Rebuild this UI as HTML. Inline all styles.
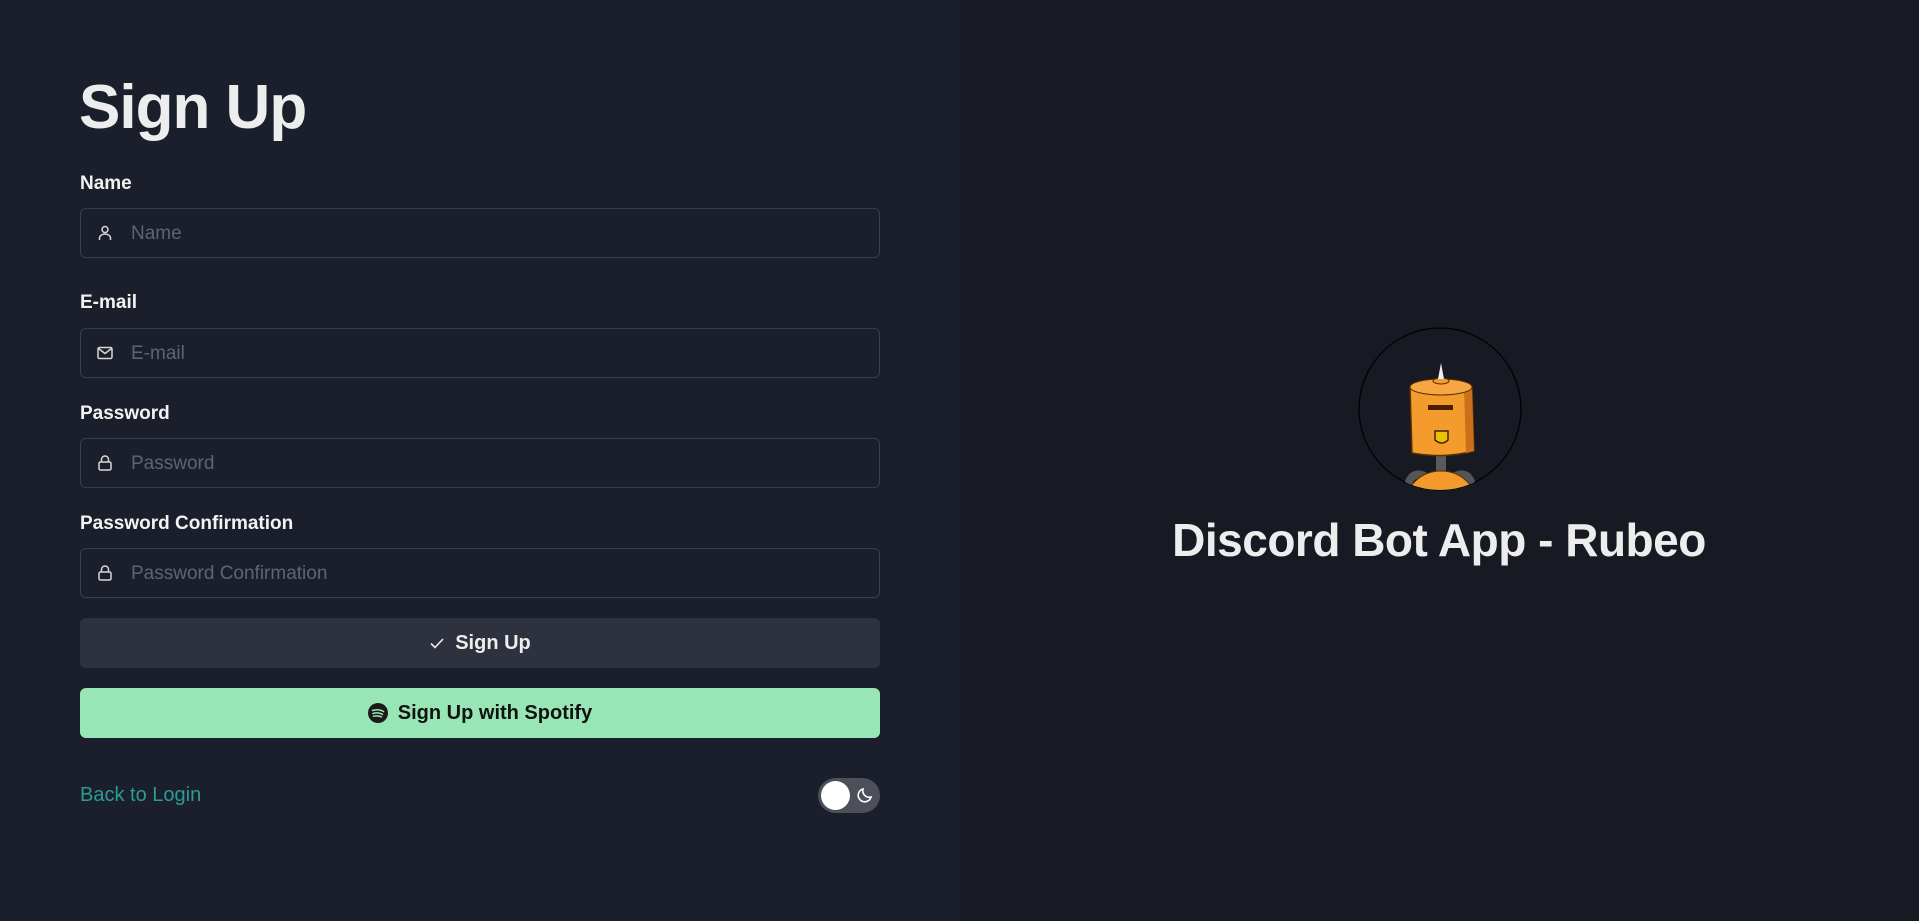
<!DOCTYPE html>
<html><head><meta charset="utf-8"><style>
*{box-sizing:border-box;margin:0;padding:0}
body{width:1919px;height:921px;overflow:hidden;font-family:"Liberation Sans",sans-serif;background:#171a22;position:relative}
.left{position:absolute;left:0;top:0;width:960px;height:921px;background:#1b1f2b}
h1{position:absolute;left:79px;top:72px;font-size:62px;font-weight:bold;color:#ededed;letter-spacing:-1px}
.lbl{position:absolute;left:80px;font-size:19px;color:#f2f2f2;font-weight:bold;-webkit-text-stroke:0}
.inp{position:absolute;left:80px;width:800px;height:50px;border:1px solid #3b3f4b;border-radius:6px;background:#1b1f2b}
.inp span{position:absolute;left:50px;top:14px;font-size:19px;color:#60646e}
.inp svg{position:absolute;left:15px;top:15px}
.btn{position:absolute;left:80px;width:800px;height:50px;border-radius:6px;display:flex;align-items:center;justify-content:center;font-size:20px;font-weight:bold}
.right h2{position:absolute;left:1039px;width:800px;text-align:center;top:513px;font-size:46px;font-weight:bold;color:#ededed;letter-spacing:-0.5px}
</style></head><body>
<div class="left">
<h1>Sign Up</h1>
<div class="lbl" style="top:173px">Name</div>
<div class="inp" style="top:208px"><svg width="18" height="18" viewBox="0 0 18 18" fill="none" stroke="#d8d8d8" stroke-width="1.5"><circle cx="9" cy="5.5" r="3"/><path d="M3.5 16v-2a5.5 4 0 0 1 11 0v2"/></svg><span>Name</span></div>
<div class="lbl" style="top:292px">E-mail</div>
<div class="inp" style="top:328px"><svg width="18" height="18" viewBox="0 0 18 18" fill="none" stroke="#d8d8d8" stroke-width="1.5"><rect x="2" y="3.5" width="14" height="11" rx="1.5"/><path d="M2.5 4.5l6.5 5 6.5-5"/></svg><span>E-mail</span></div>
<div class="lbl" style="top:403px">Password</div>
<div class="inp" style="top:438px"><svg width="18" height="18" viewBox="0 0 18 18" fill="none" stroke="#d8d8d8" stroke-width="1.5"><rect x="3" y="8" width="12" height="8" rx="1.5"/><path d="M5.5 8V5.5a3.5 3.5 0 0 1 7 0V8"/></svg><span>Password</span></div>
<div class="lbl" style="top:513px">Password Confirmation</div>
<div class="inp" style="top:548px"><svg width="18" height="18" viewBox="0 0 18 18" fill="none" stroke="#d8d8d8" stroke-width="1.5"><rect x="3" y="8" width="12" height="8" rx="1.5"/><path d="M5.5 8V5.5a3.5 3.5 0 0 1 7 0V8"/></svg><span>Password Confirmation</span></div>
<div class="btn" style="top:618px;background:#2e313e;color:#eee"><svg width="16" height="16" viewBox="0 0 16 16" fill="none" stroke="#eee" stroke-width="1.6" style="margin-right:10px"><path d="M2 8.5l4 4 8-8.5"/></svg>Sign Up</div>
<div class="btn" style="top:688px;background:#98e6b6;color:#111"><svg width="20" height="20" viewBox="0 0 20 20" style="margin-right:10px"><circle cx="10" cy="10" r="10" fill="#1a1a1a"/><path d="M4.5 7.5q6-2 11 1M5 10.5q5-1.5 9.5 0.8M5.5 13.2q4-1 8 0.6" stroke="#98e6b6" stroke-width="1.5" fill="none" stroke-linecap="round"/></svg>Sign Up with Spotify</div>
<div style="position:absolute;left:80px;top:784px;font-size:20px;color:#2b9c94">Back to Login</div>
<div style="position:absolute;left:818px;top:778px;width:62px;height:35px;border-radius:18px;background:#4d5059">
<div style="position:absolute;left:3px;top:3px;width:29px;height:29px;border-radius:50%;background:#fff"></div>
<svg width="18" height="18" viewBox="0 0 18 18" style="position:absolute;left:38px;top:8px" fill="none" stroke="#fff" stroke-width="1.6"><path d="M15 11A6.5 6.5 0 0 1 7 3a6.5 6.5 0 1 0 8 8z"/></svg></div>
</div>
<div class="right">
<svg width="164" height="164" viewBox="0 0 164 164" style="position:absolute;left:1358px;top:327px">
<defs><clipPath id="c"><circle cx="82" cy="82" r="81"/></clipPath></defs>
<circle cx="82" cy="82" r="81" fill="#171a22" stroke="#000" stroke-width="1.2"/>
<g clip-path="url(#c)">
<path d="M62 172q-18-10-8-22q6-5 14 0" fill="none" stroke="#555" stroke-width="8"/>
<path d="M102 172q18-10 8-22q-6-5-14 0" fill="none" stroke="#555" stroke-width="8"/>
<rect x="78" y="118" width="10" height="28" rx="3" fill="#5a5a5a"/>
<ellipse cx="83" cy="178" rx="36" ry="34" fill="#f29a2e" stroke="#5a3000"/>
<path d="M52 60q30-8 62 0l2 64q-30 8-62 2z" fill="#f39b2d" stroke="#5a3000" stroke-width="1.5"/>
<path d="M106 60l8 0 2 64-8 2z" fill="#c9711a"/>
<ellipse cx="83" cy="60" rx="31" ry="8" fill="#f6a744" stroke="#5a3000"/>
<ellipse cx="83" cy="54" rx="8" ry="3" fill="#f39b2d" stroke="#5a3000"/>
<path d="M80 52l3-16 3 16z" fill="#eee"/>
<rect x="70" y="78" width="25" height="5" fill="#4a1e00"/>
<path d="M77 104h13v9q-6 6-13 0z" fill="#e8c400" stroke="#4a1e00" stroke-width="1.5"/>
</g></svg>
<h2>Discord Bot App - Rubeo</h2>
</div>
</body></html>
